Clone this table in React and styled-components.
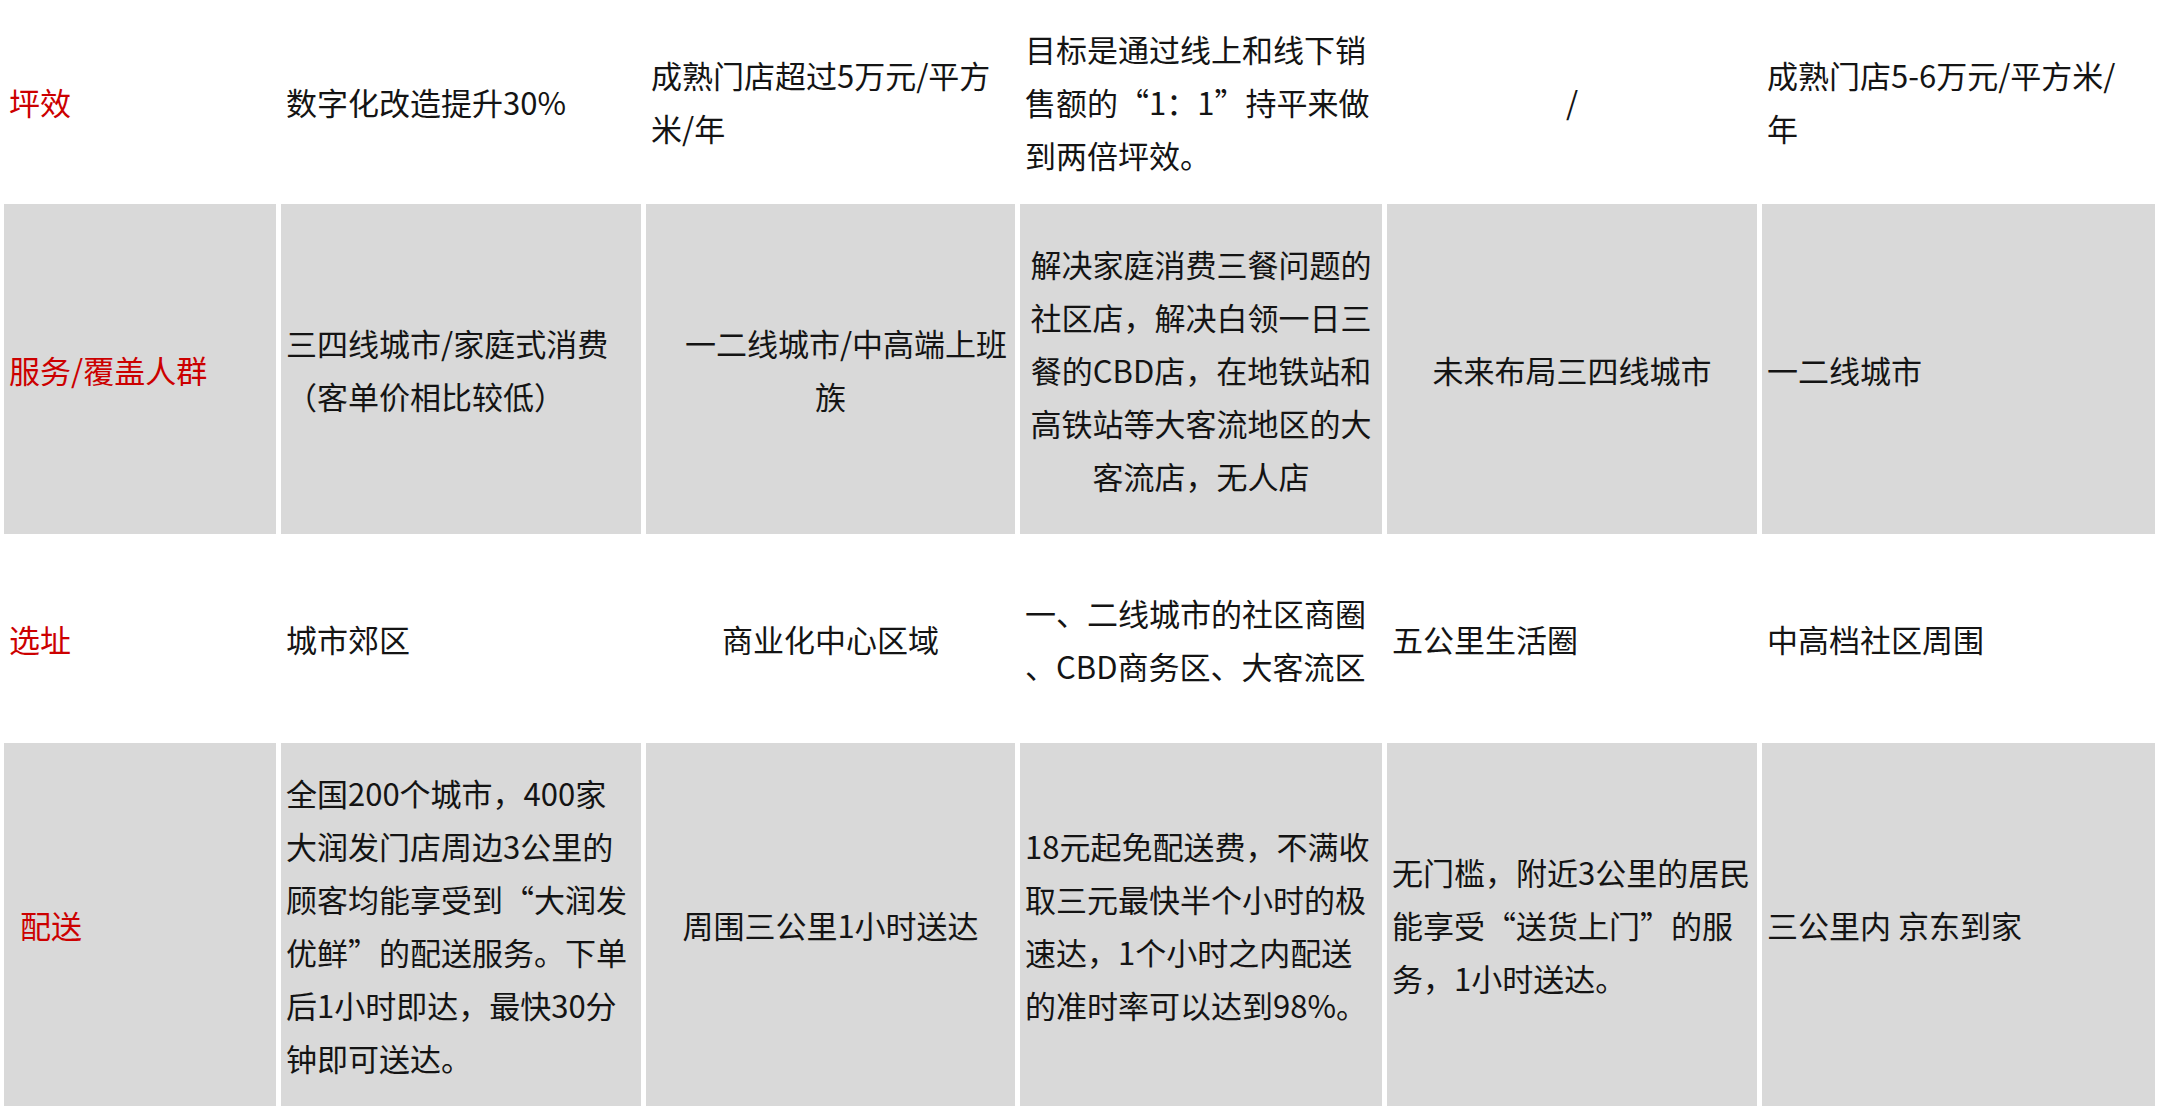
import React from "react";
import styled, { createGlobalStyle } from "styled-components";

const rows = [
  {
    label: "坪效",
    shaded: false,
    cells: [
      { text: "数字化改造提升30%" },
      { text: "成熟门店超过5万元/平方\n米/年" },
      { text: "目标是通过线上和线下销\n售额的“1：1”持平来做\n到两倍坪效。" },
      { text: "/", center: true },
      { text: "成熟门店5-6万元/平方米/\n年" },
    ],
  },
  {
    label: "服务/覆盖人群",
    shaded: true,
    cells: [
      { text: "三四线城市/家庭式消费\n（客单价相比较低）" },
      { text: "　一二线城市/中高端上班\n族", center: true },
      {
        text: "解决家庭消费三餐问题的\n社区店，解决白领一日三\n餐的CBD店，在地铁站和\n高铁站等大客流地区的大\n客流店，无人店",
        center: true,
      },
      { text: "未来布局三四线城市", center: true },
      { text: "一二线城市" },
    ],
  },
  {
    label: "选址",
    shaded: false,
    cells: [
      { text: "城市郊区" },
      { text: "商业化中心区域", center: true },
      { text: "一、二线城市的社区商圈\n、CBD商务区、大客流区" },
      { text: "五公里生活圈" },
      { text: "中高档社区周围" },
    ],
  },
  {
    label: "配送",
    indent: 11,
    shaded: true,
    cells: [
      {
        text: "全国200个城市，400家\n大润发门店周边3公里的\n顾客均能享受到“大润发\n优鲜”的配送服务。下单\n后1小时即达，最快30分\n钟即可送达。",
      },
      { text: "周围三公里1小时送达", center: true },
      { text: "18元起免配送费，不满收\n取三元最快半个小时的极\n速达，1个小时之内配送\n的准时率可以达到98%。" },
      { text: "无门槛，附近3公里的居民\n能享受“送货上门”的服\n务，1小时送达。" },
      { text: "三公里内 京东到家" },
    ],
  },
];

const GlobalStyle = createGlobalStyle`
  html, body {
    margin: 0;
    padding: 0;
    background: #fff;
  }
  body {
    font-family: "Noto Sans CJK SC", "Noto Sans", sans-serif;
    color: #111;
  }
`;

const Sheet = styled.div`
  width: 2164px;
  height: 1114px;
  box-sizing: border-box;
  padding-left: 4px;
  display: grid;
  grid-template-columns: 272px 360px 369px 362px 370px 393px;
  grid-template-rows: 202px 330px 205px 363px;
  column-gap: 5px;
  row-gap: 2px;
  overflow: hidden;
`;

const Cell = styled.div`
  background: ${(p) => (p.$shaded ? "#d9d9d9" : "#fff")};
  display: flex;
  align-items: center;
  justify-content: ${(p) => (p.$center ? "center" : "flex-start")};
  padding: 0 5px;
  box-sizing: border-box;
  overflow: hidden;
`;

const Text = styled.div`
  font-size: 31px;
  line-height: 53px;
  white-space: pre;
  text-align: ${(p) => (p.$center ? "center" : "left")};
  color: #141414;
`;

const Label = styled(Text)`
  color: #cc0000;
  padding-left: ${(p) => p.$indent || 0}px;
`;

export default function App() {
  return (
    <>
      <GlobalStyle />
      <Sheet>
        {rows.map((row) => (
          <React.Fragment key={row.label}>
            <Cell $shaded={row.shaded}>
              <Label $indent={row.indent}>{row.label}</Label>
            </Cell>
            {row.cells.map((cell, i) => (
              <Cell key={i} $shaded={row.shaded} $center={cell.center}>
                <Text $center={cell.center}>{cell.text}</Text>
              </Cell>
            ))}
          </React.Fragment>
        ))}
      </Sheet>
    </>
  );
}
